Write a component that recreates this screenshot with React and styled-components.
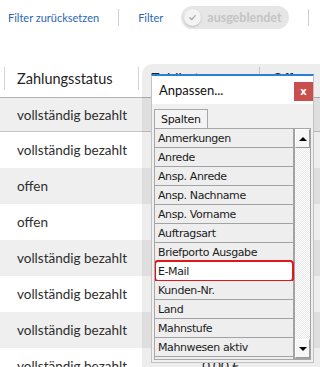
import React from "react";
import styled, { createGlobalStyle } from "styled-components";

const GlobalStyle = createGlobalStyle`
  html, body {
    margin: 0;
    padding: 0;
    background: #fff;
  }
  body {
    font-family: Lato, "Open Sans", sans-serif;
  }
`;

const rows = [
  { status: "vollständig bezahlt", amount: "0,00 €" },
  { status: "vollständig bezahlt", amount: "0,00 €" },
  { status: "offen", amount: "35,70 €" },
  { status: "offen", amount: "119,00 €" },
  { status: "vollständig bezahlt", amount: "0,00 €" },
  { status: "vollständig bezahlt", amount: "0,00 €" },
  { status: "vollständig bezahlt", amount: "0,00 €" },
  { status: "vollständig bezahlt", amount: "0,00 €" },
];

const columns = [
  "Anmerkungen",
  "Anrede",
  "Ansp. Anrede",
  "Ansp. Nachname",
  "Ansp. Vorname",
  "Auftragsart",
  "Briefporto Ausgabe",
  "E-Mail",
  "Kunden-Nr.",
  "Land",
  "Mahnstufe",
  "Mahnwesen aktiv",
  "Mahnwesen Datum",
];

const App = () => {
  return (
    <Page>
      <GlobalStyle />
      <Toolbar>
        <ToolLink>Filter zurücksetzen</ToolLink>
        <Divider />
        <ToolLink>Filter</ToolLink>
        <Toggle>
          <Knob>
            <svg width="9" height="9" viewBox="0 0 10 10">
              <path
                d="M2 5.2 L4.2 7.2 L8 3"
                fill="none"
                stroke="#a9a9a9"
                strokeWidth="1.4"
                strokeLinecap="round"
                strokeLinejoin="round"
              />
            </svg>
          </Knob>
          <span>ausgeblendet</span>
        </Toggle>
        <Divider />
      </Toolbar>

      <Table>
        <HeaderRow>
          <HeaderCell>Zahlungsstatus</HeaderCell>
          <HeaderCell>Zahlbetrag</HeaderCell>
          <HeaderCell>Offen</HeaderCell>
        </HeaderRow>
        {rows.map((r, i) => (
          <Row key={i} $odd={i % 2 === 0} $first={i === 0}>
            <Cell>{r.status}</Cell>
            <Cell $right>{r.amount}</Cell>
            <Cell />
          </Row>
        ))}
      </Table>

      <Shade>
        <Dialog>
          <TitleBar>
            <Title>Anpassen...</Title>
            <CloseButton>x</CloseButton>
          </TitleBar>
          <DialogBody>
            <Tab>Spalten</Tab>
            <ListBox>
              <Items>
                {columns.map((c) => (
                  <Item key={c} $active={c === "E-Mail"}>
                    {c}
                  </Item>
                ))}
              </Items>
              <ScrollBar>
                <ScrollButton>
                  <Arrow />
                </ScrollButton>
                <Track />
                <ScrollButton>
                  <Arrow $down />
                </ScrollButton>
              </ScrollBar>
            </ListBox>
          </DialogBody>
        </Dialog>
      </Shade>
    </Page>
  );
};

export default App;

const Page = styled.div`
  position: relative;
  width: 320px;
  height: 367px;
  overflow: hidden;
  background: #fff;
`;

const Toolbar = styled.div`
  display: flex;
  align-items: center;
  gap: 19px;
  height: 35px;
  padding-left: 8px;
`;

const ToolLink = styled.span`
  font-size: 11px;
  color: #2a66b8;
  white-space: nowrap;
`;

const Divider = styled.div`
  width: 1px;
  height: 17px;
  background: #cfcfcf;
`;

const Toggle = styled.div`
  display: flex;
  align-items: center;
  gap: 6px;
  width: 108px;
  height: 23px;
  flex: none;
  box-sizing: border-box;
  padding-left: 3px;
  margin-left: -1px;
  border-radius: 12px;
  background: #e6e6e6;
  span {
    font-size: 12.5px;
    font-weight: 700;
    color: #c4c4c4;
    white-space: nowrap;
  }
`;

const Knob = styled.div`
  width: 17px;
  height: 17px;
  flex: none;
  border-radius: 50%;
  background: #f3f3f3;
  box-shadow: 0 1px 2px rgba(0, 0, 0, 0.18);
  display: flex;
  align-items: center;
  justify-content: center;
`;

const Table = styled.div`
  margin-top: 25px;
`;

const HeaderRow = styled.div`
  display: grid;
  grid-template-columns: 134px 121px 1fr;
  padding-left: 4px;
  height: 37px;
  border-bottom: 1px solid #b4b4b4;
`;

const HeaderCell = styled.div`
  position: relative;
  display: flex;
  align-items: center;
  padding-left: 13px;
  font-size: 14.5px;
  color: #222;
  white-space: nowrap;
  &::before {
    content: "";
    position: absolute;
    left: 0;
    top: 7px;
    bottom: 7px;
    width: 1px;
    background: #d4d4d4;
  }
`;

const Row = styled.div`
  display: grid;
  grid-template-columns: 138px 121px 1fr;
  height: ${(p) => (p.$first ? "33px" : "36px")};
  background: ${(p) => (p.$odd ? "#efefef" : "#fff")};
  border-bottom: ${(p) => (p.$first ? "1px solid #c4c4c4" : "none")};
`;

const Cell = styled.div`
  display: flex;
  align-items: center;
  justify-content: ${(p) => (p.$right ? "flex-end" : "flex-start")};
  padding: ${(p) => (p.$right ? "0 19px 0 0" : "0 0 0 17px")};
  font-size: 13.5px;
  color: #2e2e2e;
  white-space: nowrap;
`;

const Shade = styled.div`
  position: absolute;
  left: 142px;
  top: 64px;
  width: 200px;
  height: 312px;
  padding: 10px 0 0 9px;
  box-sizing: border-box;
  border-radius: 10px;
  background: rgba(0, 0, 0, 0.07);
`;

const Dialog = styled.div`
  width: 163px;
  height: 289px;
  box-sizing: border-box;
  border: 1px solid #c2c2c2;
  border-top: 2px solid #2b7fd8;
  background: #f0f0f0;
  display: flex;
  flex-direction: column;
  font-family: "DejaVu Sans", Verdana, sans-serif;
`;

const TitleBar = styled.div`
  display: flex;
  align-items: center;
  justify-content: space-between;
  height: 28px;
  background: #fff;
  padding-left: 7px;
`;

const Title = styled.span`
  font-family: Lato, "Open Sans", sans-serif;
  font-size: 13px;
  color: #111;
`;

const CloseButton = styled.div`
  width: 19px;
  height: 19px;
  margin-top: 2px;
  background: #c94f4f;
  color: #fff;
  font-size: 10px;
  font-weight: bold;
  display: flex;
  align-items: center;
  justify-content: center;
`;

const DialogBody = styled.div`
  padding: 5px 2px 0 2px;
  display: flex;
  flex-direction: column;
  align-items: flex-start;
`;

const Tab = styled.div`
  height: 19px;
  box-sizing: border-box;
  padding: 0 6px;
  border: 1px solid #a7a7a7;
  border-bottom: none;
  background: #f3f3f3;
  font-size: 11px;
  letter-spacing: -0.3px;
  color: #111;
  display: flex;
  align-items: center;
`;

const ListBox = styled.div`
  display: flex;
  width: 157px;
  height: 232px;
  box-sizing: border-box;
  border: 1px solid #a7a7a7;
  border-right: none;
  background: #fff;
  overflow: hidden;
`;

const Items = styled.div`
  width: 139px;
  flex: none;
`;

const Item = styled.div`
  height: 19px;
  box-sizing: border-box;
  padding-left: 3px;
  border-bottom: 1px solid #a3a3a3;
  border-right: 1px solid #a3a3a3;
  background: ${(p) => (p.$active ? "#fff" : "#eeeeee")};
  font-size: 11px;
  letter-spacing: -0.4px;
  color: #1b1b1b;
  display: flex;
  align-items: center;
  white-space: nowrap;
  position: relative;
  ${(p) =>
    p.$active &&
    `
    &::after {
      content: "";
      position: absolute;
      left: -1px;
      right: -1px;
      top: -2px;
      bottom: -2px;
      border: 2px solid #e0161b;
      border-radius: 4px;
    }
  `}
`;

const ScrollBar = styled.div`
  display: flex;
  flex-direction: column;
  width: 18px;
  border: 1px solid #a3a3a3;
  border-top: none;
  box-sizing: border-box;
  background-color: #fafafa;
  background-image: repeating-conic-gradient(#eaeaea 0 25%, #ffffff 0 50%);
  background-size: 2px 2px;
`;

const ScrollButton = styled.div`
  height: 17px;
  flex: none;
  display: flex;
  align-items: center;
  justify-content: center;
  background: #f6f6f6;
  border: 1px solid;
  border-color: #fff #9a9a9a #9a9a9a #fff;
`;

const Track = styled.div`
  flex: 1;
`;

const Arrow = styled.div`
  width: 0;
  height: 0;
  border-left: 4px solid transparent;
  border-right: 4px solid transparent;
  ${(p) =>
    p.$down ? "border-top: 4px solid #000;" : "border-bottom: 4px solid #000;"}
`;
